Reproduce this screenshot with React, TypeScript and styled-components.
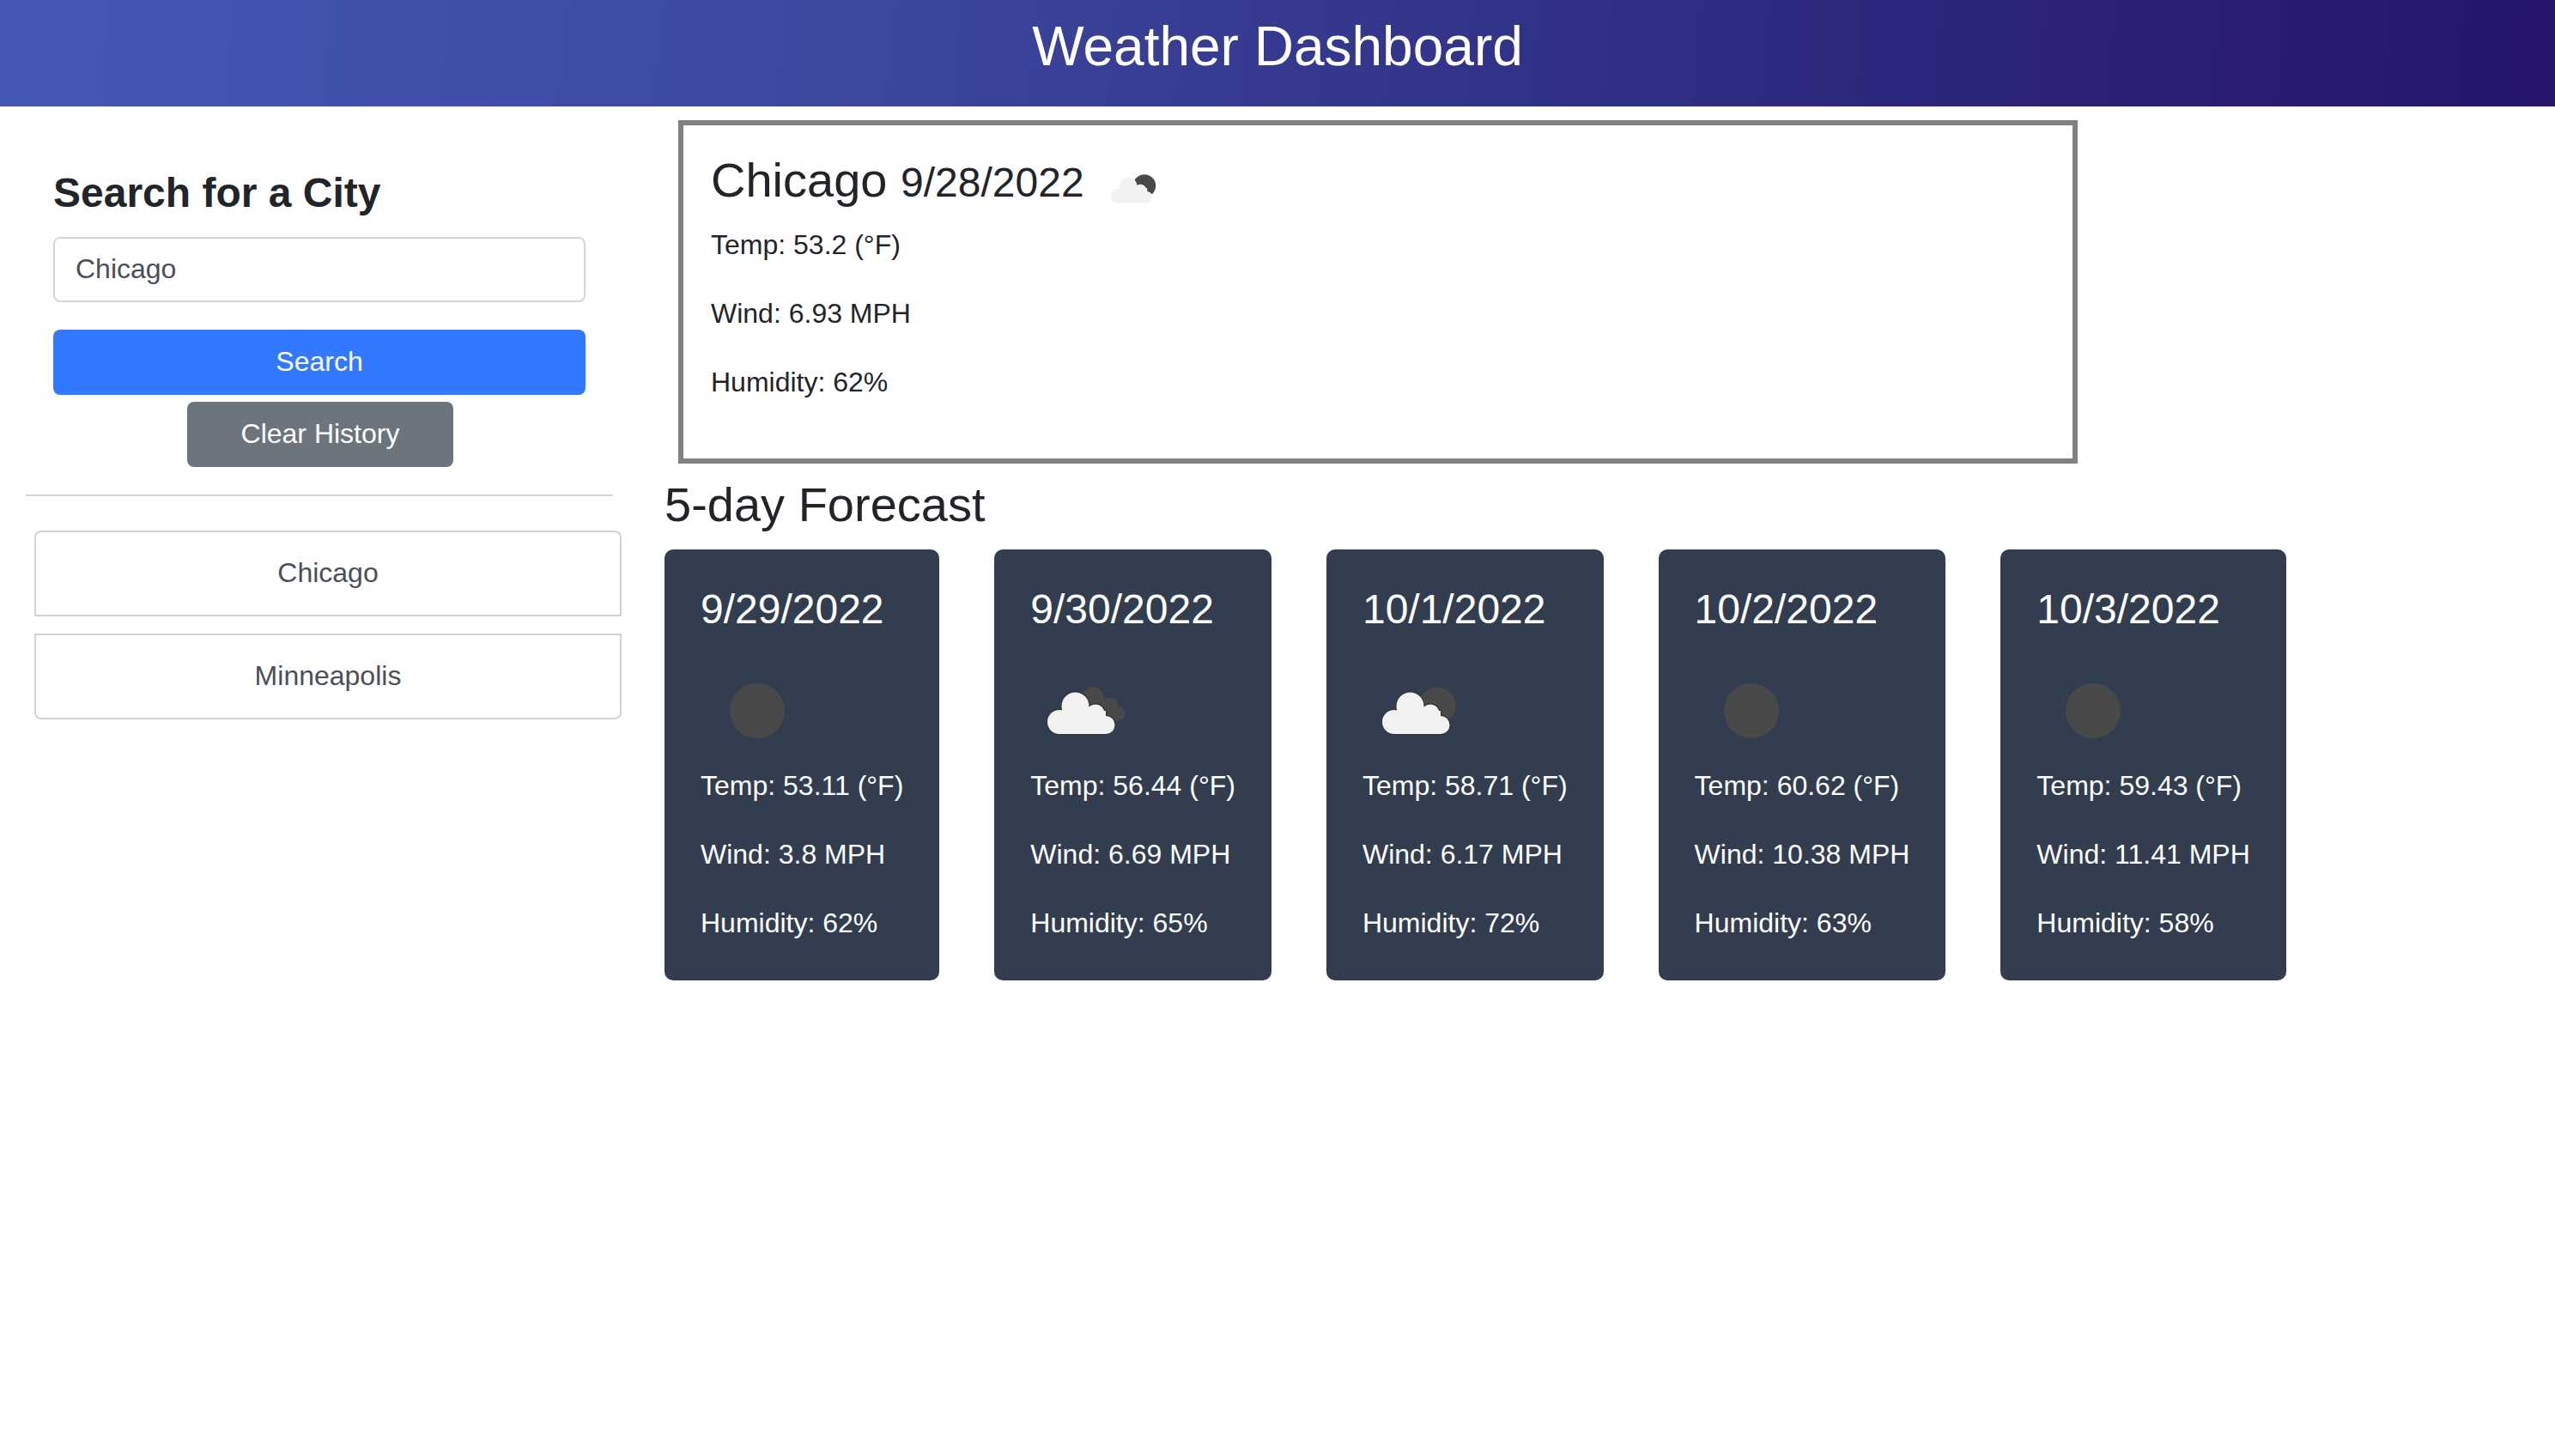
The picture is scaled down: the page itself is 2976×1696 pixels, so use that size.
import styled, { createGlobalStyle } from "styled-components";

type Sky = "clear" | "few" | "broken";

interface Day {
  date: string;
  temp: string;
  wind: string;
  humidity: string;
  sky: Sky;
}

const days: Day[] = [
  { date: "9/29/2022", temp: "53.11", wind: "3.8", humidity: "62", sky: "clear" },
  { date: "9/30/2022", temp: "56.44", wind: "6.69", humidity: "65", sky: "broken" },
  { date: "10/1/2022", temp: "58.71", wind: "6.17", humidity: "72", sky: "few" },
  { date: "10/2/2022", temp: "60.62", wind: "10.38", humidity: "63", sky: "clear" },
  { date: "10/3/2022", temp: "59.43", wind: "11.41", humidity: "58", sky: "clear" }
];

const history = ["Chicago", "Minneapolis"];

function CloudShape() {
  return (
    <>
      <circle cx="52.5" cy="56.5" r="16" />
      <circle cx="76" cy="65" r="10.5" />
      <circle cx="34" cy="75" r="14" />
      <circle cx="88" cy="78.5" r="10.5" />
      <rect x="33" y="62" width="55" height="27" />
    </>
  );
}

function WeatherIcon({ sky, halo }: { sky: Sky; halo: string }) {
  return (
    <svg viewBox="0 0 132 124" width="100%" height="100%">
      {sky === "clear" && <circle cx="66" cy="62" r="32" fill="#494949" />}
      {sky === "few" && <circle cx="84" cy="56" r="21.5" fill="#494949" />}
      {sky === "broken" && (
        <g fill="#494949">
          <circle cx="73" cy="47" r="13" />
          <circle cx="93" cy="56" r="9.5" />
          <circle cx="101.5" cy="65" r="9" />
          <rect x="70" y="50" width="26" height="24" />
        </g>
      )}
      {sky !== "clear" && (
        <>
          <g fill={halo} stroke={halo} strokeWidth="2.5">
            <CloudShape />
          </g>
          <g fill="#f2f2f0">
            <CloudShape />
          </g>
        </>
      )}
    </svg>
  );
}

export default function App() {
  return (
    <>
      <GlobalStyle />
      <Header>Weather Dashboard</Header>
      <Page>
        <Sidebar>
          <SearchForm>
            <SearchTitle>Search for a City</SearchTitle>
            <CityInput type="text" defaultValue="Chicago" />
            <SearchButton type="button">Search</SearchButton>
            <ClearButton type="button">Clear History</ClearButton>
          </SearchForm>
          <Divider />
          <HistoryList>
            {history.map((city) => (
              <HistoryButton key={city} type="button">
                {city}
              </HistoryButton>
            ))}
          </HistoryList>
        </Sidebar>
        <Main>
          <CurrentBox>
            <CurrentHead>
              <CurrentTitle>
                Chicago <CurrentDate>9/28/2022</CurrentDate>
              </CurrentTitle>
              <CurrentIcon>
                <WeatherIcon sky="few" halo="#fff" />
              </CurrentIcon>
            </CurrentHead>
            <Stat>Temp: 53.2 (°F)</Stat>
            <Stat>Wind: 6.93 MPH</Stat>
            <Stat>Humidity: 62%</Stat>
          </CurrentBox>
          <ForecastTitle>5-day Forecast</ForecastTitle>
          <Cards>
            {days.map((day) => (
              <Card key={day.date}>
                <CardDate>{day.date}</CardDate>
                <CardIcon $nudge={day.sky === "few" ? 3 : 0}>
                  <WeatherIcon sky={day.sky} halo="#33363d" />
                </CardIcon>
                <Stat>Temp: {day.temp} (°F)</Stat>
                <Stat>Wind: {day.wind} MPH</Stat>
                <Stat>Humidity: {day.humidity}%</Stat>
              </Card>
            ))}
          </Cards>
        </Main>
      </Page>
    </>
  );
}

const GlobalStyle = createGlobalStyle`
  * {
    box-sizing: border-box;
  }

  body {
    margin: 0;
    background: #fff;
    color: #212529;
    font-family: "Liberation Sans", Arial, sans-serif;
    font-size: 32px;
    line-height: 48px;
  }
`;

const Header = styled.header`
  height: 124px;
  display: flex;
  align-items: center;
  justify-content: center;
  color: #fff;
  font-size: 64px;
  line-height: 1.2;
  padding-bottom: 16px;
  background: linear-gradient(95deg, #4459b4 0%, #3c469d 35%, #2e2e82 65%, #25146a 100%);
`;

const Page = styled.div`
  display: flex;
`;

const Sidebar = styled.aside`
  flex: none;
  width: 774px;
  padding: 0 60px 0 30px;
`;

const SearchForm = styled.form`
  display: flex;
  flex-direction: column;
  align-items: center;
  width: 620px;
  margin-left: 32px;
  padding-top: 72px;
`;

const SearchTitle = styled.h4`
  align-self: flex-start;
  margin: 0 0 22px;
  font-size: 48px;
  line-height: 1.2;
  font-weight: 700;
`;

const CityInput = styled.input`
  width: 100%;
  height: 76px;
  padding: 0 24px;
  border: 2px solid #ced4da;
  border-radius: 8px;
  color: #495057;
  font: inherit;
`;

const Button = styled.button`
  height: 76px;
  padding-bottom: 2px;
  border: none;
  border-radius: 8px;
  color: #fff;
  font: inherit;
  cursor: pointer;
`;

const SearchButton = styled(Button)`
  width: 100%;
  margin-top: 32px;
  background: #3279ff;
`;

const ClearButton = styled(Button)`
  width: 310px;
  margin: 8px 0 0 2px;
  background: #6c757d;
`;

const Divider = styled.hr`
  margin: 32px 0 40px;
  border: none;
  border-top: 2px solid #d3d3d3;
`;

const HistoryList = styled.div`
  display: flex;
  flex-direction: column;
  gap: 20px;
  margin: 0 -10px 0 10px;
`;

const HistoryButton = styled.button`
  height: 100px;
  padding-bottom: 2px;
  background: #fff;
  border: 2px solid #d3d3d3;
  color: #495057;
  font: inherit;
  cursor: pointer;

  &:first-child {
    border-radius: 8px 8px 0 0;
  }

  &:last-child {
    border-radius: 0 0 8px 8px;
  }
`;

const Main = styled.main`
  flex: 1;
  padding-top: 16px;
`;

const CurrentBox = styled.section`
  width: 1630px;
  height: 400px;
  margin-left: 16px;
  padding: 30px 32px;
  border: 6px solid #808080;
`;

const CurrentHead = styled.div`
  display: flex;
  align-items: flex-start;
  margin-bottom: 3px;
`;

const CurrentTitle = styled.h3`
  margin: 0;
  font-size: 56px;
  line-height: 1.2;
  font-weight: 400;
`;

const CurrentDate = styled.span`
  font-size: 48px;
`;

const CurrentIcon = styled.span`
  width: 82px;
  height: 76px;
  margin: 6px 0 0 18px;
`;

const Stat = styled.p`
  margin: 0 0 32px;
`;

const ForecastTitle = styled.h3`
  margin: 14px 0 19px;
  font-size: 56px;
  line-height: 1.2;
  font-weight: 400;
`;

const Cards = styled.div`
  display: flex;
  gap: 64px;
`;

const Card = styled.article`
  padding: 41px 42px 11px;
  border-radius: 10px;
  background: #323d4f;
  color: #fff;
`;

const CardDate = styled.h4`
  margin: 0;
  font-size: 48px;
  line-height: 1.2;
  font-weight: 400;
`;

const CardIcon = styled.div<{ $nudge: number }>`
  width: 132px;
  height: 124px;
  margin: 27px 0 1px ${(props) => props.$nudge}px;
`;
